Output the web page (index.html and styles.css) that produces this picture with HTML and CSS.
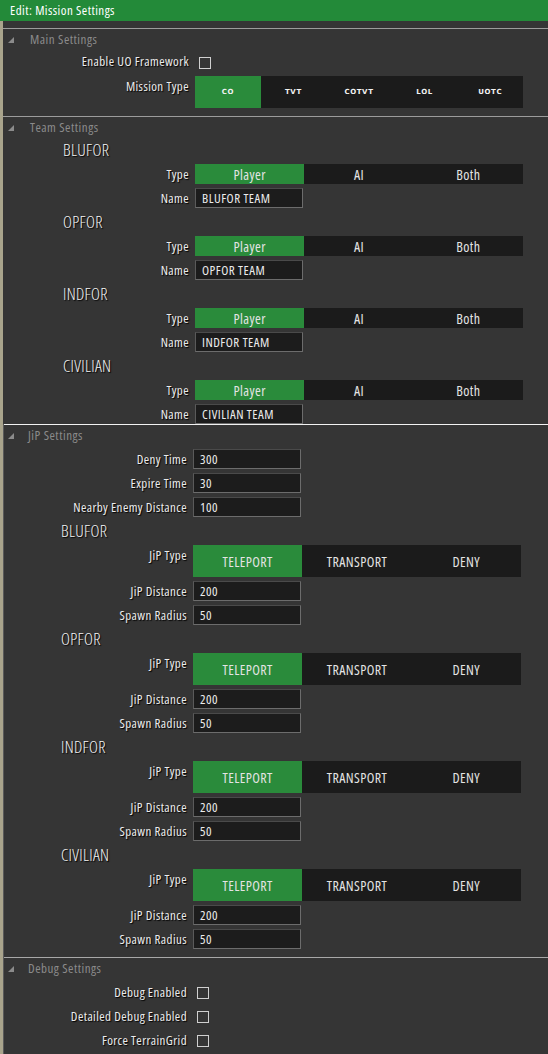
FILE: index.html
```html
<!DOCTYPE html>
<html>
<head>
<meta charset="utf-8">
<link rel="stylesheet" href="styles.css">
</head>
<body>
<div class="titlebar">Edit: Mission Settings</div>

<div class="panel upper">
  <div class="spacer"></div>
  <section class="section main">
    <div class="sec-head"><span class="tri"></span>Main Settings</div>
    <div class="row first"><span class="label">Enable UO Framework</span><span class="check"></span></div>
    <div class="row tall">
      <span class="label">Mission Type</span>
      <div class="bar mtype">
        <span class="seg on">CO</span><span class="seg">TVT</span><span class="seg">COTVT</span><span class="seg">LOL</span><span class="seg">UOTC</span>
      </div>
    </div>
  </section>

  <section class="section team">
    <div class="sec-head"><span class="tri"></span>Team Settings</div>
    <div class="side">BLUFOR</div>
    <div class="row"><span class="label">Type</span><div class="bar tri-bar"><span class="seg on">Player</span><span class="seg">AI</span><span class="seg">Both</span></div></div>
    <div class="row"><span class="label">Name</span><span class="input">BLUFOR TEAM</span></div>
    <div class="side">OPFOR</div>
    <div class="row"><span class="label">Type</span><div class="bar tri-bar"><span class="seg on">Player</span><span class="seg">AI</span><span class="seg">Both</span></div></div>
    <div class="row"><span class="label">Name</span><span class="input">OPFOR TEAM</span></div>
    <div class="side">INDFOR</div>
    <div class="row"><span class="label">Type</span><div class="bar tri-bar"><span class="seg on">Player</span><span class="seg">AI</span><span class="seg">Both</span></div></div>
    <div class="row"><span class="label">Name</span><span class="input">INDFOR TEAM</span></div>
    <div class="side">CIVILIAN</div>
    <div class="row"><span class="label">Type</span><div class="bar tri-bar"><span class="seg on">Player</span><span class="seg">AI</span><span class="seg">Both</span></div></div>
    <div class="row"><span class="label">Name</span><span class="input">CIVILIAN TEAM</span></div>
  </section>
</div>

<div class="panel lower">
  <section class="section jip">
    <div class="sec-head"><span class="tri"></span>JiP Settings</div>
    <div class="row"><span class="label">Deny Time</span><span class="input">300</span></div>
    <div class="row"><span class="label">Expire Time</span><span class="input">30</span></div>
    <div class="row"><span class="label">Nearby Enemy Distance</span><span class="input">100</span></div>

    <div class="side">BLUFOR</div>
    <div class="row tall"><span class="label">JiP Type</span><div class="bar jbar"><span class="seg on">TELEPORT</span><span class="seg">TRANSPORT</span><span class="seg">DENY</span></div></div>
    <div class="row"><span class="label">JiP Distance</span><span class="input">200</span></div>
    <div class="row"><span class="label">Spawn Radius</span><span class="input">50</span></div>

    <div class="side">OPFOR</div>
    <div class="row tall"><span class="label">JiP Type</span><div class="bar jbar"><span class="seg on">TELEPORT</span><span class="seg">TRANSPORT</span><span class="seg">DENY</span></div></div>
    <div class="row"><span class="label">JiP Distance</span><span class="input">200</span></div>
    <div class="row"><span class="label">Spawn Radius</span><span class="input">50</span></div>

    <div class="side">INDFOR</div>
    <div class="row tall"><span class="label">JiP Type</span><div class="bar jbar"><span class="seg on">TELEPORT</span><span class="seg">TRANSPORT</span><span class="seg">DENY</span></div></div>
    <div class="row"><span class="label">JiP Distance</span><span class="input">200</span></div>
    <div class="row"><span class="label">Spawn Radius</span><span class="input">50</span></div>

    <div class="side">CIVILIAN</div>
    <div class="row tall"><span class="label">JiP Type</span><div class="bar jbar"><span class="seg on">TELEPORT</span><span class="seg">TRANSPORT</span><span class="seg">DENY</span></div></div>
    <div class="row"><span class="label">JiP Distance</span><span class="input">200</span></div>
    <div class="row"><span class="label">Spawn Radius</span><span class="input">50</span></div>
  </section>

  <section class="section debug">
    <div class="sec-head"><span class="tri"></span>Debug Settings</div>
    <div class="crow"><span class="label">Debug Enabled</span><span class="check"></span></div>
    <div class="crow"><span class="label">Detailed Debug Enabled</span><span class="check"></span></div>
    <div class="crow"><span class="label">Force TerrainGrid</span><span class="check"></span></div>
  </section>
</div>
</body>
</html>
```

FILE: styles.css
```css
* { box-sizing: border-box; }

html, body {
  margin: 0;
  padding: 0;
}

body {
  width: 548px;
  height: 1054px;
  overflow: hidden;
  background: #a9a48c;
  font-family: "Open Sans", "DejaVu Sans Condensed", sans-serif;
  font-stretch: 75%;
  font-weight: 400;
  color: #e6e6e6;
  font-size: 13px;
  letter-spacing: 0.4px;
}

.titlebar {
  height: 21px;
  background: #238a39;
  color: #ffffff;
  font-size: 13px;
  letter-spacing: 0.45px;
  line-height: 21px;
  padding-left: 10px;
}

.panel {
  margin-left: 3px;
  background: #353535;
}

.upper {
  height: 403px;
}

.spacer {
  height: 7px;
}

.section {
  border-top: 1px solid #9c9c9c;
  display: flex;
  flex-direction: column;
}

.sec-head {
  height: 20px;
  line-height: 20px;
  color: #8b8b8b;
  font-size: 13px;
  letter-spacing: 0.5px;
  padding-left: 27px;
  position: relative;
}

.tri {
  position: absolute;
  left: 5px;
  top: 8px;
  width: 0;
  height: 0;
  border-left: 6px solid transparent;
  border-bottom: 6px solid #8b8b8b;
}

.row {
  display: flex;
  align-items: center;
  height: 20px;
  margin-top: 4px;
}

.label {
  width: 186px;
  text-align: right;
  flex: none;
  margin-right: 6px;
  text-shadow: 1px 1px 1px #000;
  color: #ececec;
}

.check {
  width: 12px;
  height: 12px;
  border: 1px solid #d0d0d0;
  margin-left: 4px;
  margin-top: 3px;
}

.bar {
  display: flex;
  background: #1b1b1b;
  width: 328px;
}

.seg {
  flex: 1;
  display: flex;
  align-items: center;
  justify-content: center;
  color: #e4e4e4;
  font-size: 14px;
  letter-spacing: 0.4px;
}

.seg.on {
  background: #2a8b3b;
}

/* main settings */
.row.first {
  margin-top: 0;
  height: 24px;
}

.row.tall {
  height: 32px;
  align-items: flex-start;
  margin-top: 3px;
}

.row.tall .label {
  line-height: 20px;
}

.mtype {
  height: 32px;
}

.mtype .seg {
  font-family: "DejaVu Sans", sans-serif;
  font-stretch: 100%;
  font-weight: bold;
  font-size: 7px;
  letter-spacing: 0.6px;
  color: #f2f2f2;
}

.main {
  padding-bottom: 8px;
}

/* team */
.side {
  height: 20px;
  line-height: 20px;
  margin-top: 4px;
  padding-left: 60px;
  font-size: 17px;
  font-weight: 300;
  letter-spacing: 0.3px;
  color: #f4f4f4;
  text-shadow: 1px 1px 1px #000;
}

.team .sec-head + .side {
  margin-top: 3px;
}

.tri-bar {
  height: 20px;
}

.input {
  width: 108px;
  height: 20px;
  background: #1c1c1c;
  border: 1px solid #6c6c6c;
  border-top-color: #4a4a4a;
  border-left-color: #5a5a5a;
  line-height: 18px;
  padding-left: 6px;
  color: #ececec;
  font-size: 13px;
  letter-spacing: 0.5px;
}

/* lower */
.lower {
  height: 630px;
  border-left: 1px solid #5a5a5a;
}

.lower .section.jip {
  border-top: 1px solid #f2f2f2;
  padding-bottom: 8px;
}

.lower .label {
  width: 183px;
}

.lower .side {
  padding-left: 57px;
}

.jip .row.tall {
  margin-top: 4px;
}

.jip .sec-head,
.debug .sec-head {
  padding-left: 24px;
}

.jip .sec-head .tri,
.debug .sec-head .tri {
  left: 4px;
}

.jbar {
  height: 32px;
}

.debug {
  border-top: 1px solid #a8a8a8;
}

.crow {
  display: flex;
  align-items: center;
  height: 24px;
}

.debug .sec-head + .crow {
  margin-top: 2px;
}

.crow .check {
  margin-top: 2px;
}
```
